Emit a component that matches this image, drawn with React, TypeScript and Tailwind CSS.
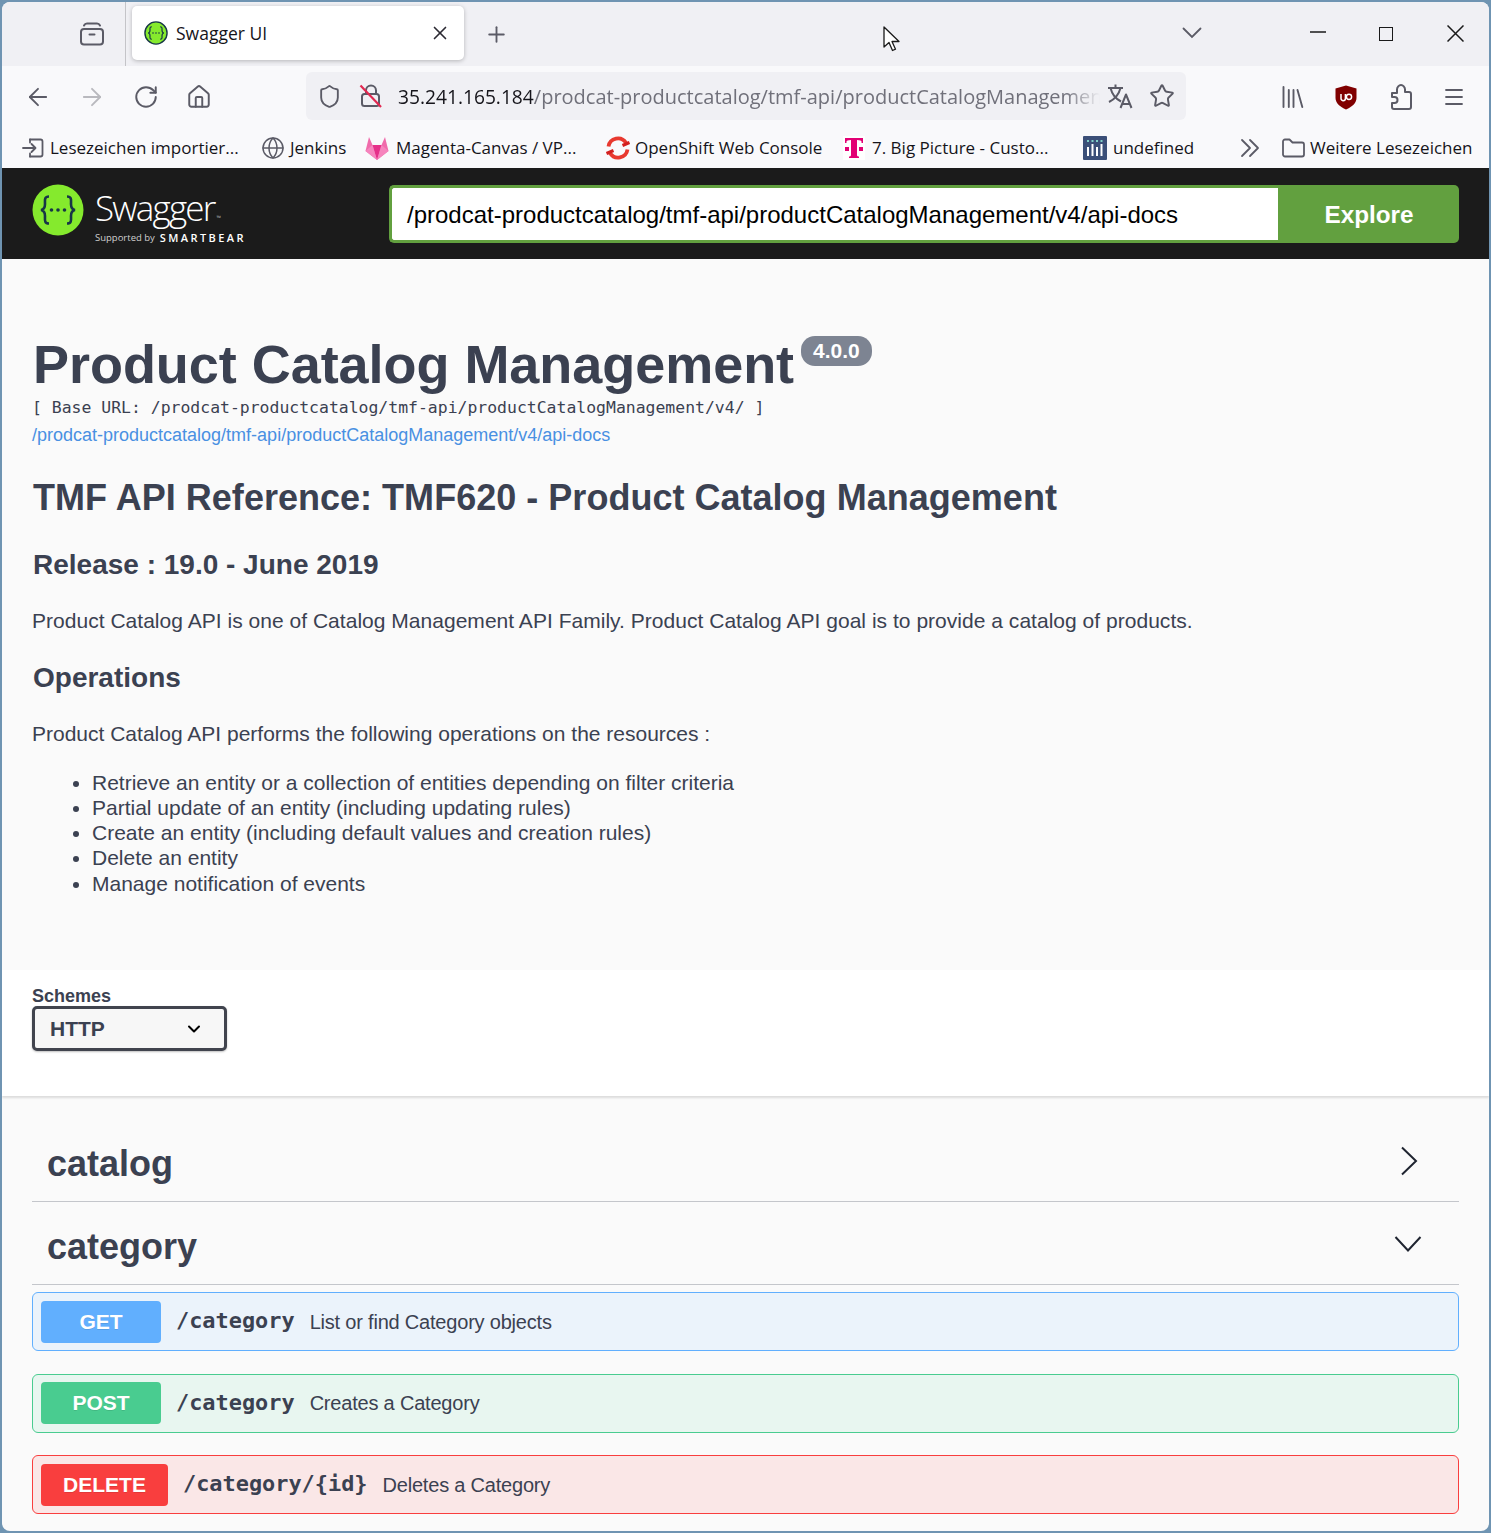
import { ArrowLeft, ArrowRight, ChevronDown, Globe, Home, Menu, Plus, RotateCw, Shield, Star, X } from "lucide-react";

const sans = "font-['Liberation_Sans',Arial,sans-serif]";
const ui = "font-['Open_Sans','Noto_Sans',sans-serif]";
const mono = "font-['DejaVu_Sans_Mono',monospace]";

function TabsIcon() {
  return (
    <svg width="26" height="26" viewBox="0 0 26 26" fill="none" stroke="#5b5b66" strokeWidth="2" strokeLinecap="round">
      <path d="M5 4.500q1-2 3-2h10q2 0 3 2" />
      <rect x="2" y="8" width="22" height="15.500" rx="3" />
      <path d="M10.500 13.500h5" />
    </svg>
  );
}

function SwaggerMark({ size, outline }: { size: number; outline?: boolean }) {
  return (
    <svg width={size} height={size} viewBox="0 0 52 52">
      <circle cx="26" cy="26" r={outline ? 24 : 25.500} fill="#85ea2d" stroke={outline ? "#173647" : "none"} strokeWidth={outline ? 3 : 0} />
      <path d="M17 12.500c-5 0-4 4-4 7.500 0 4-1 5.500-4 6 3 .5 4 2 4 6 0 3.500-1 7.500 4 7.500M35 12.500c5 0 4 4 4 7.500 0 4 1 5.500 4 6-3 .5-4 2-4 6 0 3.500 1 7.500-4 7.500" fill="none" stroke="#173647" strokeWidth="2.600" />
      <circle cx="19.500" cy="26" r="1.800" fill="#173647" />
      <circle cx="26" cy="26" r="1.800" fill="#173647" />
      <circle cx="32.500" cy="26" r="1.800" fill="#173647" />
    </svg>
  );
}

function LockOff() {
  return (
    <svg width="24" height="26" viewBox="0 0 24 26" fill="none">
      <path d="M7 11V7.500a5 5 0 0 1 10 0V11" stroke="#5b5b66" strokeWidth="2" />
      <rect x="3" y="11" width="17" height="12" rx="2.500" stroke="#5b5b66" strokeWidth="2" />
      <path d="M1.500 2.500 22 24" stroke="#e22850" strokeWidth="2.200" />
    </svg>
  );
}

function TranslateIcon() {
  return (
    <svg width="26" height="26" viewBox="0 0 26 26" fill="none" stroke="#5b5b66" strokeWidth="2" strokeLinejoin="round">
      <path d="M1 5h15M8.500 1.500V5M3.500 5c1.500 6 5.500 11 10.500 13.500M13.500 5C12 11 8 16 2 19" />
      <path d="M13.500 25l5.500-13.500L24.500 25M15.500 21h7" />
    </svg>
  );
}

function LibraryIcon() {
  return (
    <svg width="22" height="24" viewBox="0 0 22 24" fill="none" stroke="#5b5b66" strokeWidth="1.900" strokeLinecap="round">
      <path d="M1.500 2v20M6.800 5v17M11.500 5v17M15.500 5l4.800 17" />
    </svg>
  );
}

function UBlock() {
  return (
    <svg width="22" height="25" viewBox="0 0 22 25">
      <path d="M11 0.500 21.500 3.500V13c0 5-4.500 9-10.500 11.500C5 22 0.500 18 0.500 13V3.500Z" fill="#800000" />
      <path d="M6 9v4.500a2.200 2.200 0 0 0 4.400 0V9" fill="none" stroke="#fff" strokeWidth="1.500" />
      <circle cx="14" cy="11.800" r="2.600" fill="none" stroke="#fff" strokeWidth="1.500" />
    </svg>
  );
}

function PuzzleIcon() {
  return (
    <svg width="22" height="26" viewBox="0 0 22 26" fill="none" stroke="#5b5b66" strokeWidth="2" strokeLinejoin="round">
      <path d="M2 9h5V5.500C7 3 9 1 11 1s4 2 4 4.500V8h4a2 2 0 0 1 2 2v13a2 2 0 0 1-2 2H4a2 2 0 0 1-2-2v-4h2.500c2 0 3-1.500 3-3s-1-3-3-3H2Z" />
    </svg>
  );
}

function ImportIcon() {
  return (
    <svg width="22" height="20" viewBox="0 0 22 20" fill="none" stroke="#5b5b66" strokeWidth="1.800" strokeLinecap="round" strokeLinejoin="round">
      <path d="M8 1.500h10.500a2 2 0 0 1 2 2v13a2 2 0 0 1-2 2H8" />
      <path d="M1 10h12M9.500 6l4 4-4 4M8 1.500v3M8 15.500v3" />
    </svg>
  );
}

function GitlabIcon() {
  return (
    <svg width="24" height="25" viewBox="0 0 24 25">
      <path d="M12 24 0.500 15 4 1 7.500 9h9L20 1l3.500 14Z" fill="#f06bab" />
      <path d="M12 24 7.500 9h9Z" fill="#e5308a" />
      <path d="M12 24 0.500 15l7-6Z" fill="#f684bd" />
      <path d="M12 24l11.500-9-7-6Z" fill="#f684bd" />
    </svg>
  );
}

function OpenShiftIcon() {
  return (
    <svg width="26" height="24" viewBox="0 0 26 24" fill="none" stroke="#e8392f" strokeWidth="3.800">
      <path d="M3.500 10.500A9.500 9.500 0 0 1 21 7" />
      <path d="M22.500 13.500A9.500 9.500 0 0 1 5 17" />
      <path d="M17.500 9.500 24.500 6.500M8.500 14.500 1.500 17.500" stroke="#d3201f" strokeWidth="3.200" />
    </svg>
  );
}

function TelekomIcon() {
  return (
    <svg width="22" height="24" viewBox="0 0 22 24" className="bg-white" fill="#e20074">
      <path d="M2 2h18v5h-1.500V5.500c0-.5-1.500-1.500-4.500-1.500v15c0 1 1 1.500 2 1.500V22H6v-1.500c1 0 2-.5 2-1.500V4c-3 0-4.500 1-4.500 1.500V7H2Z" />
      <rect x="2" y="11" width="4" height="4" />
      <rect x="16" y="11" width="4" height="4" />
    </svg>
  );
}

function UndefinedIcon() {
  return (
    <svg width="24" height="24" viewBox="0 0 24 24">
      <rect width="24" height="24" rx="1" fill="#3b4f78" />
      <path d="M5 4v2M9.500 4v2M14 4v2M18.500 4v2" stroke="#7fd0c8" strokeWidth="2" />
      <path d="M5 11v9M9.500 8v12M14 11v9M18.500 8v12" stroke="#fff" strokeWidth="2" />
    </svg>
  );
}

function FolderIcon() {
  return (
    <svg width="23" height="20" viewBox="0 0 23 20" fill="none" stroke="#5b5b66" strokeWidth="1.800" strokeLinejoin="round">
      <path d="M1 3.500a2 2 0 0 1 2-2h4.500l3 3H20a2 2 0 0 1 2 2v10a2 2 0 0 1-2 2H3a2 2 0 0 1-2-2Z" />
    </svg>
  );
}

function DoubleChevron() {
  return (
    <svg width="20" height="20" viewBox="0 0 20 20" fill="none" stroke="#5b5b66" strokeWidth="1.800" strokeLinecap="round" strokeLinejoin="round">
      <path d="M2 2l8 8-8 8M10 2l8 8-8 8" />
    </svg>
  );
}

function Bookmark({ icon, label, className }: { icon: React.ReactNode; label: string; className: string }) {
  return (
    <div className={`flex shrink-0 items-center ${className}`}>
      {icon}
      <span className="whitespace-nowrap">{label}</span>
    </div>
  );
}

function Operation({ method, path, summary, badge, row }: { method: string; path: string; summary: string; badge: string; row: string }) {
  return (
    <div className={`flex h-[59px] items-center rounded-[6px] border pl-[8px] ${row}`}>
      <div className={`flex h-[42px] items-center justify-center rounded-[4px] text-[21px] font-bold text-white [text-shadow:0_1px_0_rgba(0,0,0,0.1)] ${badge} ${sans}`}>{method}</div>
      <div className={`ml-[15px] text-[21.900px] font-bold text-[#3b4151] ${mono}`}>{path}</div>
      <div className={`ml-[15px] text-[20px] tracking-[-0.2px] text-[#3b4151] ${sans}`}>{summary}</div>
    </div>
  );
}

export default function App() {
  return (
    <div className="relative h-[1533px] w-[1491px] overflow-hidden bg-[#6f94b2] p-[2px]">
      <div className="h-full overflow-hidden rounded-[8px] bg-[#fafafa]">
        {/* tabs */}
        <div className="flex h-[64px] items-center bg-[#f0f0f4]">
          <div className="flex h-full w-[124px] items-center justify-end border-r border-[#c4c4c8] pr-[20px]">
            <TabsIcon />
          </div>
          <div className={`-mt-[2px] ml-[6px] flex h-[54px] w-[332px] items-center rounded-[5px] bg-white pl-[12px] pr-[13px] text-[#15141a] shadow-[0_1px_4px_rgba(0,0,0,0.25)] ${ui}`}>
            <SwaggerMark size={24} outline />
            <span className="ml-[8px] text-[17.500px]">Swagger UI</span>
            <X className="ml-auto text-[#2b2a33]" size={22} strokeWidth={1.800} />
          </div>
          <Plus className="ml-[20px] text-[#5b5b66]" size={25} strokeWidth={1.800} />
          <svg className="ml-[673px] -mt-[2px]" width="20" height="12" viewBox="0 0 20 12" fill="none" stroke="#5b5b66" strokeWidth="1.800" strokeLinecap="round"><path d="M1.500 1.500 10 10l8.500-8.500" /></svg>
          <svg className="ml-[108px] -mt-[4px]" width="16" height="2" viewBox="0 0 16 2"><path d="M0 1h16" stroke="#1a1a1a" strokeWidth="1.300" /></svg>
          <div className="ml-[53px] -mt-[1px] h-[14px] w-[14px] border-[1.500px] border-[#1a1a1a]" />
          <svg className="ml-[54px] -mt-[1px]" width="17" height="17" viewBox="0 0 17 17" fill="none" stroke="#1a1a1a" strokeWidth="1.500"><path d="M.5.500l16 16M16.500.500l-16 16" /></svg>
        </div>
        {/* toolbar */}
        <div className="flex h-[63px] items-center bg-[#f9f9fb] pb-[3px]">
          <ArrowLeft className="ml-[22px] mt-[2px] text-[#5b5b66]" size={28} strokeWidth={1.600} />
          <ArrowRight className="ml-[26px] mt-[2px] text-[#b9b9be]" size={28} strokeWidth={1.600} />
          <RotateCw className="ml-[27px] mt-[2px] text-[#5b5b66]" size={26} strokeWidth={1.800} />
          <Home className="ml-[27px] mt-[2px] text-[#5b5b66]" size={26} strokeWidth={1.800} />
          <div className={`ml-[94px] flex h-[48px] w-[880px] items-center rounded-[6px] bg-[#f0f0f4] pl-[11px] ${ui}`}>
            <Shield className="text-[#5b5b66]" size={25} strokeWidth={1.800} />
            <div className="ml-[17px] w-[24px]"><LockOff /></div>
            <div className="ml-[15px] mt-[2px] w-[702px] overflow-hidden whitespace-nowrap text-[19.200px] text-[#15141a] [mask-image:linear-gradient(to_right,black_95%,transparent)]">
              35.241.165.184<span className="text-[20px] text-[#70707a]">/prodcat-productcatalog/tmf-api/productCatalogManagement/v4/api-docs</span>
            </div>
            <div className="ml-[7px]"><TranslateIcon /></div>
            <Star className="ml-[16px] text-[#5b5b66]" size={26} strokeWidth={1.800} />
          </div>
          <div className="ml-[96px] mt-[2px]"><LibraryIcon /></div>
          <div className="ml-[31px] mt-[2px]"><UBlock /></div>
          <div className="ml-[33px] mt-[2px]"><PuzzleIcon /></div>
          <Menu className="ml-[30px] mt-[2px] text-[#5b5b66]" size={24} strokeWidth={1.800} />
        </div>
        {/* bookmarks */}
        <div className={`flex h-[40px] items-center border-b border-[#1b1b1b] bg-[#f9f9fb] pb-[1px] pl-[20px] text-[17px] text-[#15141a] ${ui}`}>
          <Bookmark icon={<ImportIcon />} label="Lesezeichen importier..." className="w-[239px] gap-[6px]" />
          <Bookmark icon={<Globe className="text-[#5b5b66]" size={24} strokeWidth={1.500} />} label="Jenkins" className="w-[104px] gap-[5px]" />
          <Bookmark icon={<GitlabIcon />} label="Magenta-Canvas / VP..." className="w-[240px] gap-[7px]" />
          <Bookmark icon={<OpenShiftIcon />} label="OpenShift Web Console" className="w-[238px] gap-[4px]" />
          <Bookmark icon={<TelekomIcon />} label="7. Big Picture - Custo..." className="w-[240px] gap-[7px]" />
          <Bookmark icon={<UndefinedIcon />} label="undefined" className="w-[157px] gap-[6px]" />
          <div className="w-[42px]"><DoubleChevron /></div>
          <Bookmark icon={<FolderIcon />} label="Weitere Lesezeichen" className="gap-[5px]" />
        </div>
        {/* swagger top bar */}
        <div className="flex h-[90px] items-center bg-[#1b1b1b] pl-[30px] pr-[30px]">
          <div className="flex w-[357px] items-start gap-[11px] self-start pt-[15px]">
            <SwaggerMark size={52} />
            <div className={`mt-[2px] text-white ${ui}`}>
              <div className="flex items-end">
                <span className="text-[35px] font-light leading-[44px] tracking-[-1.800px]">Swagger</span>
                <span className="mb-[9px] ml-[2px] text-[6px] leading-[6px] text-[#aaaaaa]">™</span>
              </div>
              <div className="mt-[1px] flex items-center gap-[5px] whitespace-nowrap text-[9.500px] leading-[14px] text-[#cfcfcf]">
                Supported by <span className="text-[11px] font-semibold tracking-[2.400px] text-white">SMARTBEAR</span>
              </div>
            </div>
          </div>
          <div className={`flex h-[58px] flex-1 items-center rounded-l-[5px] border-[3px] border-r-0 border-[#62a03f] bg-white pl-[15px] pt-[2px] text-[24px] text-black ${sans}`}>
            /prodcat-productcatalog/tmf-api/productCatalogManagement/v4/api-docs
          </div>
          <div className={`flex h-[58px] w-[181px] items-center justify-center rounded-r-[5px] bg-[#62a03f] pl-[1px] pt-[2px] text-[24.300px] font-bold text-white ${sans}`}>Explore</div>
        </div>
        {/* info */}
        <div className={`h-[711px] pl-[30px] pt-[72px] text-[#3b4151] ${sans}`}>
          <div className="flex h-[66px] items-start">
            <h1 className="ml-[1px] text-[54px] font-bold leading-[66px] tracking-[-0.04px]">Product Catalog Management</h1>
            <span className="ml-[7px] mt-[5px] rounded-[14px] bg-[#7d8492] px-[12px] text-[21px] font-bold leading-[30px] text-white">4.0.0</span>
          </div>
          <div className={`text-[16.450px] leading-[22px] ${mono}`}>[ Base URL: /prodcat-productcatalog/tmf-api/productCatalogManagement/v4/ ]</div>
          <div className="mt-[5px] text-[18px] leading-[22px] text-[#4990e2]">/prodcat-productcatalog/tmf-api/productCatalogManagement/v4/api-docs</div>
          <h2 className="ml-[1px] mt-[30px] text-[36px] font-bold leading-[44px] tracking-[0.02px]">TMF API Reference: TMF620 - Product Catalog Management</h2>
          <h3 className="ml-[1px] mt-[28px] text-[28px] font-bold leading-[34px]">Release : 19.0 - June 2019</h3>
          <p className="mt-[24px] text-[21px] leading-[30px] tracking-[0.025px]">Product Catalog API is one of Catalog Management API Family. Product Catalog API goal is to provide a catalog of products.</p>
          <h3 className="ml-[1px] mt-[25px] text-[28px] font-bold leading-[34px]">Operations</h3>
          <p className="mt-[24px] text-[21px] leading-[30px]">Product Catalog API performs the following operations on the resources :</p>
          <ul className="mt-[21px] list-disc pl-[60px] text-[21px] leading-[25.150px]">
            <li>Retrieve an entity or a collection of entities depending on filter criteria</li>
            <li>Partial update of an entity (including updating rules)</li>
            <li>Create an entity (including default values and creation rules)</li>
            <li>Delete an entity</li>
            <li>Manage notification of events</li>
          </ul>
        </div>
        {/* schemes */}
        <div className={`h-[126px] bg-white pl-[30px] pt-[16px] text-[#3b4151] shadow-[0_2px_2px_rgba(0,0,0,0.12)] ${sans}`}>
          <div className="text-[18px] font-bold leading-[20px]">Schemes</div>
          <div className="flex h-[45px] w-[195px] items-center rounded-[5px] border-[3px] border-[#41444e] bg-[#f7f7f7] pl-[15px] pr-[20px] text-[21px] font-bold shadow-[0_1px_2px_rgba(0,0,0,0.25)]">
            HTTP
            <ChevronDown className="ml-auto text-black" size={20} strokeWidth={2.400} />
          </div>
        </div>
        {/* operations */}
        <div className={`px-[30px] text-[#3b4151] ${sans}`}>
          <div className="flex h-[106px] items-end border-b border-[#c4c6cb] pb-[15px] pl-[15px] pr-[41px]">
            <span className="text-[36px] font-bold leading-[44px]">catalog</span>
            <svg className="mb-[10px] ml-auto" width="18" height="30" viewBox="0 0 18 30" fill="none" stroke="#1f2430" strokeWidth="2"><path d="M2 1.500 16 15 2 28.500" /></svg>
          </div>
          <div className="flex h-[83px] items-end border-b border-[#c4c6cb] pb-[15px] pl-[15px] pr-[37px]">
            <span className="text-[36px] font-bold leading-[44px]">category</span>
            <svg className="mb-[16px] ml-auto" width="28" height="18" viewBox="0 0 28 18" fill="none" stroke="#1f2430" strokeWidth="2"><path d="M1.500 2 14 15.500 26.500 2" /></svg>
          </div>
          <div className="mt-[7px] flex flex-col gap-[22px]">
            <Operation method="GET" path="/category" summary="List or find Category objects" badge="w-[120px] bg-[#61affe]" row="mb-[1px] border-[#61affe] bg-[#ebf3fb]" />
            <Operation method="POST" path="/category" summary="Creates a Category" badge="w-[120px] bg-[#49cc90]" row="border-[#49cc90] bg-[#e8f6f0] pb-[1px]" />
            <Operation method="DELETE" path="/category/{id}" summary="Deletes a Category" badge="w-[127px] bg-[#f93e3e]" row="border-[#f93e3e] bg-[#fae7e7]" />
          </div>
        </div>
      </div>
      {/* mouse pointer */}
      <svg className="absolute left-[883px] top-[26px]" width="20" height="28" viewBox="0 0 20 28" fill="#fff" stroke="#1a1a1a" strokeWidth="1.300" strokeLinejoin="round">
        <path d="M1 1v20l5-4.500 3.500 8 3-1.300-3.500-7.700h7Z" />
      </svg>
    </div>
  );
}
